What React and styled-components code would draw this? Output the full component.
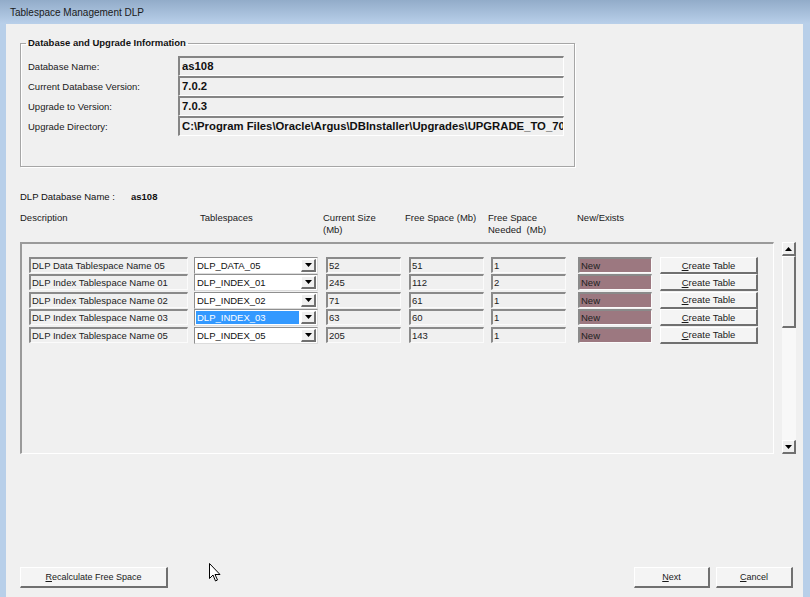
import React from "react";
import styled, { createGlobalStyle } from "styled-components";

const GlobalStyle = createGlobalStyle`
  html, body {
    margin: 0;
    padding: 0;
    height: 100%;
    overflow: hidden;
  }
  body {
    font-family: "Liberation Sans", Arial, sans-serif;
    color: #111;
  }
  #root {
    height: 100%;
  }
`;

const rows = [
  { desc: "DLP Data Tablespace Name 05", ts: "DLP_DATA_05", size: "52", free: "51", need: "1" },
  { desc: "DLP Index Tablespace Name 01", ts: "DLP_INDEX_01", size: "245", free: "112", need: "2" },
  { desc: "DLP Index Tablespace Name 02", ts: "DLP_INDEX_02", size: "71", free: "61", need: "1" },
  { desc: "DLP Index Tablespace Name 03", ts: "DLP_INDEX_03", size: "63", free: "60", need: "1", selected: true },
  { desc: "DLP Index Tablespace Name 05", ts: "DLP_INDEX_05", size: "205", free: "143", need: "1" },
];

const ArrowDown = () => (
  <svg width="7" height="4" viewBox="0 0 7 4">
    <polygon points="0,0 7,0 3.5,4" fill="#000" />
  </svg>
);

const ArrowUp = () => (
  <svg width="7" height="4" viewBox="0 0 7 4">
    <polygon points="0,4 7,4 3.5,0" fill="#000" />
  </svg>
);

const Cursor = () => (
  <svg width="12" height="19" viewBox="0 0 12 19">
    <path d="M0.5 0.5 L0.5 15.5 L4 12 L6.5 18 L8.5 17 L6 11.5 L11 11.5 Z" fill="#fff" stroke="#000" strokeWidth="1" />
  </svg>
);

export default function App() {
  return (
    <Window>
      <GlobalStyle />
      <TitleBar>Tablespace Management DLP</TitleBar>
      <Frame>
        <Client>
          <GroupBox>
            <Legend>Database and Upgrade Information</Legend>
            <InfoGrid>
              <InfoLabel>Database Name:</InfoLabel>
              <InfoField>as108</InfoField>
              <InfoLabel>Current Database Version:</InfoLabel>
              <InfoField>7.0.2</InfoField>
              <InfoLabel>Upgrade to Version:</InfoLabel>
              <InfoField>7.0.3</InfoField>
              <InfoLabel>Upgrade Directory:</InfoLabel>
              <InfoField>C:\Program Files\Oracle\Argus\DBInstaller\Upgrades\UPGRADE_TO_703</InfoField>
            </InfoGrid>
          </GroupBox>

          <DbNameRow>
            <DbNameLabel>DLP Database Name :</DbNameLabel>
            <DbNameValue>as108</DbNameValue>
          </DbNameRow>

          <HeaderRow>
            <HeaderCell>Description</HeaderCell>
            <HeaderCell>Tablespaces</HeaderCell>
            <HeaderCell>Current Size<br />(Mb)</HeaderCell>
            <HeaderCell>Free Space (Mb)</HeaderCell>
            <HeaderCell>Free Space<br />Needed&nbsp; (Mb)</HeaderCell>
            <HeaderCell>New/Exists</HeaderCell>
          </HeaderRow>

          <GridArea>
            <Panel>
              <RowsGrid>
                {rows.map((r) => (
                  <React.Fragment key={r.desc}>
                    <Sunken $w={159}>{r.desc}</Sunken>
                    <Combo>
                      <ComboValue $selected={r.selected}>{r.ts}</ComboValue>
                      <DropButton>
                        <ArrowDown />
                      </DropButton>
                    </Combo>
                    <Sunken $w={75}>{r.size}</Sunken>
                    <Sunken $w={75}>{r.free}</Sunken>
                    <Sunken $w={75}>{r.need}</Sunken>
                    <Sunken $w={74} $bg="#9c7880">New</Sunken>
                    <RowButton>
                      <u>C</u>reate Table
                    </RowButton>
                  </React.Fragment>
                ))}
              </RowsGrid>
            </Panel>
            <ScrollBar>
              <ScrollButton>
                <ArrowUp />
              </ScrollButton>
              <Thumb />
              <Track />
              <ScrollButton>
                <ArrowDown />
              </ScrollButton>
            </ScrollBar>
          </GridArea>

          <Footer>
            <FooterButton $w={148}>
              <u>R</u>ecalculate Free Space
            </FooterButton>
            <FooterRight>
              <FooterButton $w={76}>
                <u>N</u>ext
              </FooterButton>
              <FooterButton $w={77}>
                <u>C</u>ancel
              </FooterButton>
            </FooterRight>
          </Footer>
        </Client>
      </Frame>
      <MousePointer>
        <Cursor />
      </MousePointer>
    </Window>
  );
}

const Window = styled.div`
  position: relative;
  height: 100vh;
  display: flex;
  flex-direction: column;
  background: #b8cfe9;
  overflow: hidden;
`;

const TitleBar = styled.div`
  flex: 0 0 24px;
  display: flex;
  align-items: center;
  padding-left: 10px;
  background: linear-gradient(#92acc9, #b9d0ea);
  font-size: 10px;
  color: #1a1a1a;
`;

const Frame = styled.div`
  flex: 1;
  min-height: 0;
  display: flex;
  padding: 0 7px 0 6px;
`;

const Client = styled.div`
  flex: 1;
  display: flex;
  flex-direction: column;
  background: #f0f0f0;
  padding: 0 7px 9px 14px;
  font-size: 9.5px;
`;

const GroupBox = styled.fieldset`
  box-sizing: border-box;
  width: 555px;
  margin: 12px 0 0 0;
  padding: 0 10px 30px 7px;
  border: 1px solid #a6a6a6;
  box-shadow: inset 1px 1px 0 #fff, 1px 1px 0 #fff;
`;

const Legend = styled.legend`
  padding: 0 2px;
  margin-left: -2px;
  font-weight: bold;
  font-size: 9.5px;
  line-height: 14px;
  color: #111;
`;

const InfoGrid = styled.div`
  display: grid;
  grid-template-columns: 150px 386px;
  grid-auto-rows: 20px;
  align-items: center;
  margin-top: 6px;
`;

const InfoLabel = styled.div`
  font-size: 9.5px;
  color: #1a1a1a;
`;

const InfoField = styled.div`
  box-sizing: border-box;
  height: 20px;
  padding: 1px 0 0 2px;
  border-top: 2px solid #858585;
  border-left: 2px solid #858585;
  border-right: 1px solid #fff;
  border-bottom: 1px solid #fff;
  background: #f0f0f0;
  font-weight: bold;
  font-size: 11.3px;
  line-height: 15px;
  white-space: nowrap;
  overflow: hidden;
`;

const DbNameRow = styled.div`
  display: flex;
  align-items: center;
  height: 14px;
  margin-top: 22px;
`;

const DbNameLabel = styled.span`
  width: 111px;
`;

const DbNameValue = styled.span`
  font-weight: bold;
`;

const HeaderRow = styled.div`
  display: grid;
  grid-template-columns: 180px 123px 82px 83px 89px auto;
  margin-top: 9px;
  line-height: 12px;
  height: 24px;
`;

const HeaderCell = styled.div`
  color: #1a1a1a;
`;

const GridArea = styled.div`
  display: flex;
  gap: 8px;
  height: 212px;
  margin-top: 6px;
`;

const Panel = styled.div`
  box-sizing: border-box;
  width: 754px;
  border-top: 2px solid #9a9a9a;
  border-left: 2px solid #9a9a9a;
  border-right: 1px solid #fff;
  border-bottom: 1px solid #fff;
  padding: 12px 0 0 7px;
`;

const RowsGrid = styled.div`
  display: grid;
  grid-template-columns: 165px 132px 83px 82px 87px 82px 98px;
  grid-auto-rows: 17.4px;
  align-items: start;
`;

const Sunken = styled.div`
  box-sizing: border-box;
  width: ${(p) => p.$w}px;
  height: 16px;
  margin-top: 1px;
  padding-left: 1px;
  border-top: 2px solid #8a8a8a;
  border-left: 2px solid #8a8a8a;
  border-right: 1px solid #fbfbfb;
  border-bottom: 1px solid #fbfbfb;
  background: ${(p) => p.$bg || "#f0f0f0"};
  font-size: 9.5px;
  line-height: 13px;
  color: #222;
  white-space: nowrap;
  overflow: hidden;
`;

const Combo = styled.div`
  box-sizing: border-box;
  width: 124px;
  height: 17px;
  display: flex;
  align-items: stretch;
  padding: 1px;
  margin-top: 1px;
  border-top: 1px solid #8f8f8f;
  border-left: 1px solid #8f8f8f;
  border-right: 1px solid #dcdcdc;
  border-bottom: 1px solid #dcdcdc;
  background: #fff;
`;

const ComboValue = styled.div`
  flex: 1;
  padding-left: 1px;
  margin-right: 2px;
  font-size: 9.5px;
  line-height: 13px;
  background: ${(p) => (p.$selected ? "#3399ff" : "transparent")};
  color: ${(p) => (p.$selected ? "#fff" : "#111")};
  white-space: nowrap;
  overflow: hidden;
`;

const raised = `
  box-sizing: border-box;
  display: flex;
  align-items: center;
  justify-content: center;
  background: #f0f0f0;
  border-top: 1px solid #fff;
  border-left: 1px solid #fff;
  border-right: 2px solid #707070;
  border-bottom: 2px solid #707070;
`;

const DropButton = styled.div`
  ${raised}
  width: 15px;
`;

const RowButton = styled.div`
  ${raised}
  width: 98px;
  height: 17px;
  margin-top: 1px;
  font-size: 9.5px;
  color: #1a1a1a;
  background: #f4f4f4;
`;

const ScrollBar = styled.div`
  width: 14px;
  display: flex;
  flex-direction: column;
  background: #f8f8f8;
`;

const ScrollButton = styled.div`
  ${raised}
  height: 14px;
`;

const Thumb = styled.div`
  ${raised}
  height: 72px;
`;

const Track = styled.div`
  flex: 1;
`;

const Footer = styled.div`
  margin-top: auto;
  display: flex;
  justify-content: space-between;
  padding-right: 3px;
`;

const FooterRight = styled.div`
  display: flex;
  gap: 6px;
`;

const FooterButton = styled.div`
  ${raised}
  width: ${(p) => p.$w}px;
  height: 21px;
  font-size: 9px;
  color: #1a1a1a;
  background: #f4f4f4;
`;

const MousePointer = styled.div`
  position: absolute;
  left: 209px;
  top: 563px;
  line-height: 0;
`;
